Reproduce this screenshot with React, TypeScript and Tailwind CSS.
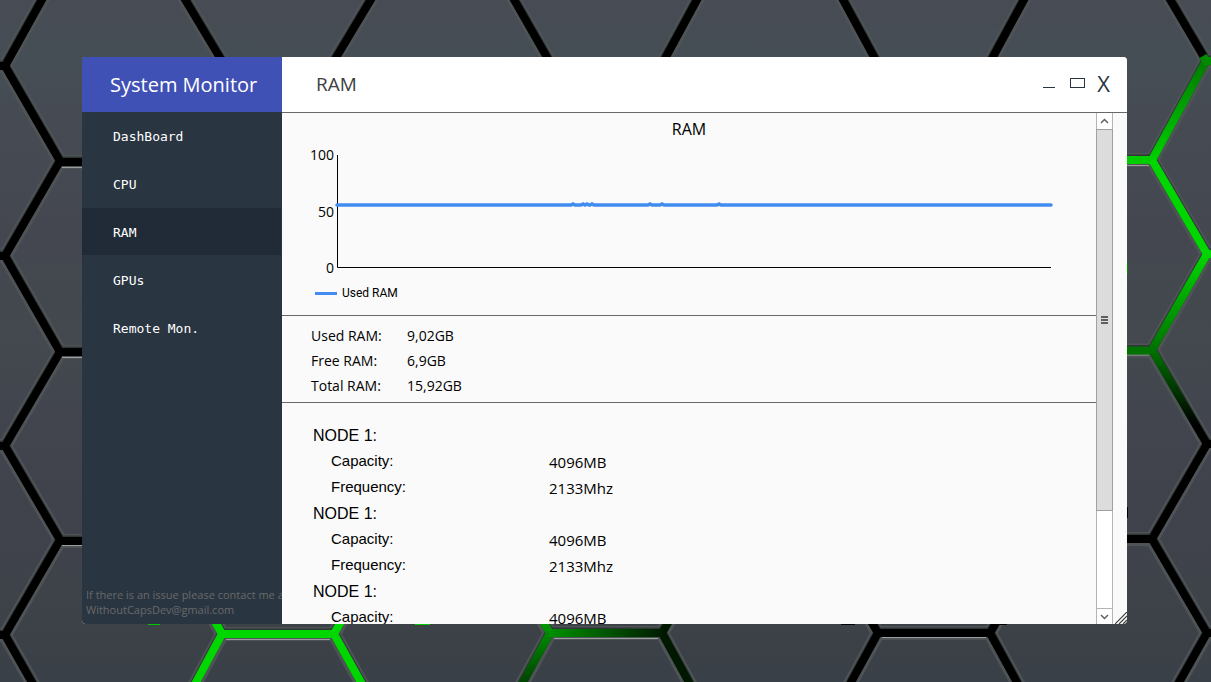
import { useState } from "react";

const pages = ["DashBoard", "CPU", "RAM", "GPUs", "Remote Mon."];

const summary = [
  { label: "Used RAM:", value: "9,02GB" },
  { label: "Free RAM:", value: "6,9GB" },
  { label: "Total RAM:", value: "15,92GB" },
];

const nodes = [
  {
    name: "NODE 1:",
    fields: [
      { label: "Capacity:", value: "4096MB" },
      { label: "Frequency:", value: "2133Mhz" },
    ],
  },
  {
    name: "NODE 1:",
    fields: [
      { label: "Capacity:", value: "4096MB" },
      { label: "Frequency:", value: "2133Mhz" },
    ],
  },
  { name: "NODE 1:", fields: [{ label: "Capacity:", value: "4096MB" }] },
];

const peaks = [236, 246, 250, 255, 313, 325, 382];
const usedLine =
  "M0 50" + peaks.map((x) => `L${x - 2} 50L${x} 49L${x + 2} 50`).join("") + "L714 50";

const black = "#000000";
const edges: { d: string; color: string }[] = [
  { d: "M44 -4L5 66L60 161L5 256L60 352L5 446L60 540L5 635L34 686", color: black },
  { d: "M-6 66H5M-6 256H5M-6 446H5M-6 635H5", color: black },
  { d: "M60 162H100", color: black },
  { d: "M60 352H100", color: black },
  { d: "M60 541H100", color: black },
  { d: "M183 -4L225 66", color: black },
  { d: "M373 -4L331 66", color: black },
  { d: "M512 -4L552 66", color: black },
  { d: "M699 -4L661 66", color: black },
  { d: "M841 -4L879 66", color: black },
  { d: "M1026 -4L988 66", color: black },
  { d: "M1168 -4L1204 57", color: black },
  { d: "M1206 61L1152 160", color: "url(#rise)" },
  { d: "M1203 56L1206 61H1220", color: "#008a00" },
  { d: "M1110 160H1152", color: "#00cc00" },
  { d: "M1152 160L1207 254", color: "#00d600" },
  { d: "M1207 254H1220", color: "#00d600" },
  { d: "M1207 254L1152 350", color: "url(#drop)" },
  { d: "M1110 350.5H1152", color: "#007200" },
  { d: "M1152 350L1207 444", color: "url(#fade)" },
  { d: "M1220 444H1207L1152 539L1207 633L1177 686", color: black },
  { d: "M1110 539H1152", color: black },
  { d: "M1207 633H1220", color: black },
  { d: "M194 686L222 634L212 616M222 634H334M344 616L334 634L363 686", color: "#00d600" },
  { d: "M540 616L550 633L521 686", color: "url(#leftFade)" },
  { d: "M672 616L662 633L691 686", color: "#001800" },
  { d: "M550 633L662 633.1", color: "url(#across)" },
  { d: "M849 686L878 633L868 616M878 633H990M1000 616L990 633L1019 686", color: black },
];

function Wallpaper() {
  return (
    <svg
      className="absolute inset-0 h-full w-full"
      viewBox="0 0 1211 682"
      preserveAspectRatio="xMidYMid slice"
      aria-hidden="true"
    >
      <defs>
        <linearGradient id="metal" x1="0" y1="0" x2="0" y2="1">
          <stop offset="0" stopColor="#484b54" />
          <stop offset="0.08" stopColor="#454e54" />
          <stop offset="0.16" stopColor="#464b53" />
          <stop offset="0.35" stopColor="#44474f" />
          <stop offset="0.5" stopColor="#43494f" />
          <stop offset="0.66" stopColor="#41434d" />
          <stop offset="0.88" stopColor="#3e4249" />
          <stop offset="1" stopColor="#3a4047" />
        </linearGradient>
        <linearGradient id="rise" gradientUnits="userSpaceOnUse" x1="0" y1="61" x2="0" y2="160">
          <stop offset="0" stopColor="#007a00" />
          <stop offset="1" stopColor="#00d000" />
        </linearGradient>
        <linearGradient id="drop" gradientUnits="userSpaceOnUse" x1="0" y1="254" x2="0" y2="350">
          <stop offset="0" stopColor="#00d600" />
          <stop offset="1" stopColor="#007200" />
        </linearGradient>
        <linearGradient id="fade" gradientUnits="userSpaceOnUse" x1="0" y1="350" x2="0" y2="425">
          <stop offset="0" stopColor="#007200" />
          <stop offset="1" stopColor="#000000" />
        </linearGradient>
        <linearGradient id="leftFade" gradientUnits="userSpaceOnUse" x1="0" y1="625" x2="0" y2="682">
          <stop offset="0" stopColor="#009400" />
          <stop offset="1" stopColor="#004400" />
        </linearGradient>
        <linearGradient id="across" gradientUnits="userSpaceOnUse" x1="550" y1="0" x2="662" y2="0">
          <stop offset="0" stopColor="#009000" />
          <stop offset="1" stopColor="#001c00" />
        </linearGradient>
      </defs>
      <rect width="1211" height="682" fill="url(#metal)" />
      <g fill="none">
        {edges.map((e) => (
          <path key={e.d} d={e.d} stroke="#4e5456" strokeWidth="14" />
        ))}
        {edges.map((e) => (
          <path key={e.d} d={e.d} stroke="#303737" strokeWidth="9" transform="translate(0 -1)" />
        ))}
        <path
          d="M62 167.500H82M62 357.500H82M62 545.500H82M1127 165.500H1149M1127 355H1149M1127 542.500H1149M226 639.500H330M554 638.500H658M882 637.500H986"
          stroke="#9a9f9d"
        />
        {edges.map((e) => (
          <path key={e.d} d={e.d} stroke={e.color} strokeWidth="8" />
        ))}
        <path d="M148 624.500H160M415 624.500H430" stroke="#00c800" />
        <path d="M841 624.500H855M997 624.500H1007M1127.500 507V518" stroke="#000000" />
        <path d="M1127.500 263V274" stroke="#008a00" />
      </g>
    </svg>
  );
}

export default function App() {
  const [page, setPage] = useState("RAM");

  return (
    <div className="relative h-screen overflow-hidden bg-[#42474f] pt-[57px] pr-[84px] pb-[58px] pl-[82px] font-['Open_Sans',sans-serif] text-black">
      <Wallpaper />
      <div className="relative flex h-full overflow-hidden rounded bg-[#fafafa]">
        <aside className="flex w-[200px] shrink-0 flex-col bg-[#293541]">
          <h1 className="flex h-[55px] shrink-0 items-center bg-[#3f51b5] pl-7 text-xl text-white">
            System Monitor
          </h1>
          <nav className="flex flex-col pr-px">
            {pages.map((p) => (
              <button
                key={p}
                type="button"
                onClick={() => setPage(p)}
                className={`h-12 border-b border-[#293541] pt-[3px] pl-[31px] text-left font-['DejaVu_Sans_Mono',monospace] text-[13px] text-white ${
                  p === page ? "bg-[#202b37]" : "bg-[#293541]"
                }`}
              >
                {p}
              </button>
            ))}
          </nav>
          <p className="mt-auto overflow-hidden pb-[7px] pl-1 text-[11px] leading-[15px] whitespace-nowrap text-[#696969]">
            If there is an issue please contact me at
            <br />
            WithoutCapsDev@gmail.com
          </p>
        </aside>

        <main className="flex min-w-0 flex-1 flex-col">
          <header className="flex h-14 shrink-0 items-center justify-between border-b border-[#696969] bg-white pr-[17px] pl-[34px]">
            <h2 className="text-[19px] text-[#404040]">{page}</h2>
            <div className="flex items-center gap-3 pb-[3px] text-[#293541]">
              <button type="button" aria-label="Minimize">
                <svg width="15" height="16" viewBox="0 0 15 16" fill="none" stroke="currentColor">
                  <path d="M1 12.500H13" />
                </svg>
              </button>
              <button type="button" aria-label="Maximize">
                <svg width="16" height="16" viewBox="0 0 16 16" fill="none" stroke="currentColor">
                  <rect x="1.500" y="3.500" width="14" height="9" />
                </svg>
              </button>
              <button type="button" aria-label="Close" className="text-[22px] leading-6">
                X
              </button>
            </div>
          </header>

          <div className="flex min-h-0 flex-1 pr-3.5">
            <div className="min-w-0 flex-1 overflow-hidden">
              <section className="border-b border-[#696969] pt-1.5 pb-3">
                <h3 className="text-center text-base leading-5">RAM</h3>
                <div className="mt-1.5 flex h-[133px] gap-[3px] pr-[45px]">
                  <div className="flex w-[52px] flex-col justify-between text-right text-sm leading-5">
                    <span>100</span>
                    <span>50</span>
                    <span>0</span>
                  </div>
                  <svg
                    className="my-2.5 h-[113px] min-w-0 flex-1 overflow-visible"
                    viewBox="0 0 714 113"
                    preserveAspectRatio="none"
                    fill="none"
                    role="img"
                    aria-label="Used RAM"
                  >
                    <path d="M0.500 0V112.500H714" stroke="#000000" />
                    <path d={usedLine} stroke="#418cf0" strokeWidth="3.500" strokeLinecap="round" />
                  </svg>
                </div>
                <div className="mt-[5px] flex items-center gap-[5px] pl-[33px] font-[Roboto,sans-serif] text-xs leading-5">
                  <span className="h-[3px] w-[22px] bg-[#418cf0]" />
                  Used RAM
                </div>
              </section>

              <section className="border-b border-[#696969] pt-[7px] pb-1 pl-[29px]">
                <dl className="grid grid-cols-[96px_1fr] text-sm leading-[25px]">
                  {summary.map((s) => (
                    <div key={s.label} className="contents">
                      <dt>{s.label}</dt>
                      <dd>{s.value}</dd>
                    </div>
                  ))}
                </dl>
              </section>

              <section className="pt-[19px] pl-[31px]">
                {nodes.map((n, i) => (
                  <div key={i}>
                    <h3 className="pt-0.5 font-['Liberation_Sans',sans-serif] text-base leading-6">
                      {n.name}
                    </h3>
                    <dl className="grid grid-cols-[218px_1fr] pl-[18px] text-[15px]">
                      {n.fields.map((f) => (
                        <div key={f.label} className="contents">
                          <dt className="font-['Liberation_Sans',sans-serif] leading-[26px]">
                            {f.label}
                          </dt>
                          <dd className="pt-0.5 leading-6">{f.value}</dd>
                        </div>
                      ))}
                    </dl>
                  </div>
                ))}
              </section>
            </div>

            <div className="flex w-[17px] shrink-0 flex-col border-x border-[#b4b4b4] bg-white text-[#606060]">
              <button type="button" aria-label="Scroll up" className="flex h-4 items-center justify-center">
                <svg width="9" height="6" viewBox="0 0 9 6" fill="none" stroke="currentColor" strokeWidth="1.500">
                  <path d="M1 5L4.500 1.500L8 5" />
                </svg>
              </button>
              <div className="-mx-px flex flex-[382] items-center justify-center border border-[#a0a0a0] bg-[#dcdcdc]">
                <svg width="7" height="8" viewBox="0 0 7 8" fill="#606060">
                  <path d="M0 0h7v2H0zM0 3h7v2H0zM0 6h7v2H0z" />
                </svg>
              </div>
              <div className="flex-[97]" />
              <button
                type="button"
                aria-label="Scroll down"
                className="flex h-4 items-center justify-center border-t border-[#b4b4b4]"
              >
                <svg width="9" height="6" viewBox="0 0 9 6" fill="none" stroke="currentColor" strokeWidth="1.500">
                  <path d="M1 1L4.500 4.500L8 1" />
                </svg>
              </button>
            </div>
          </div>
        </main>

        <svg
          className="absolute right-0 bottom-0"
          width="12"
          height="12"
          viewBox="0 0 12 12"
          stroke="#404040"
          strokeWidth="1.200"
          aria-hidden="true"
        >
          <path d="M0 12L12 0M4 12L12 4M8 12L12 8" />
        </svg>
      </div>
    </div>
  );
}
